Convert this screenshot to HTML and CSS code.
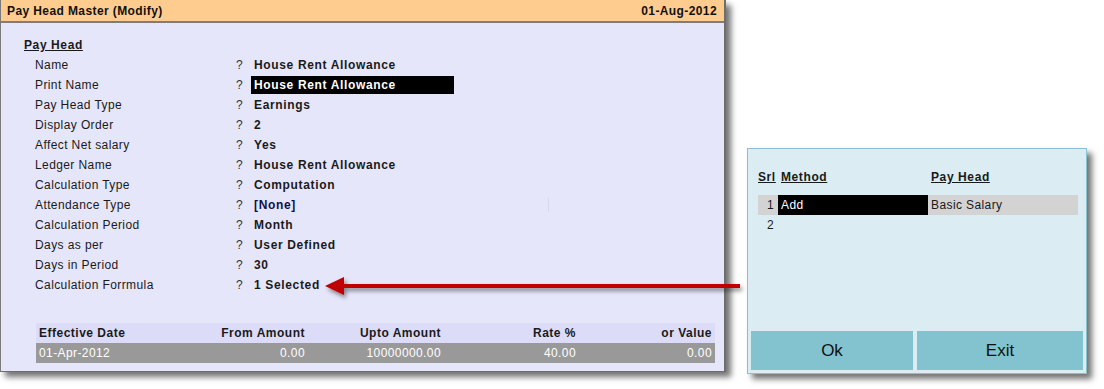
FILE: index.html
```html
<!DOCTYPE html>
<html lang="en">
<head>
  <meta charset="UTF-8">
  <title>Pay Head Master (Modify)</title>
  <link rel="stylesheet" href="styles.css">
</head>
<body>
  <div class="desk">
    <!-- Main window -->
    <div class="window">
      <div class="titlebar">
        <span>Pay Head Master (Modify)</span>
        <span>01-Aug-2012</span>
      </div>
      <div class="content">
        <div class="form">
          <div class="heading">Pay Head</div>
          <div class="row"><span class="label">Name</span><span class="q">?</span><span class="value">House Rent Allowance</span></div>
          <div class="row"><span class="label">Print Name</span><span class="q">?</span><span class="value active">House Rent Allowance</span></div>
          <div class="row"><span class="label">Pay Head Type</span><span class="q">?</span><span class="value">Earnings</span></div>
          <div class="row"><span class="label">Display Order</span><span class="q">?</span><span class="value">2</span></div>
          <div class="row"><span class="label">Affect Net salary</span><span class="q">?</span><span class="value">Yes</span></div>
          <div class="row"><span class="label">Ledger Name</span><span class="q">?</span><span class="value">House Rent Allowance</span></div>
          <div class="row"><span class="label">Calculation Type</span><span class="q">?</span><span class="value">Computation</span></div>
          <div class="row"><span class="label">Attendance Type</span><span class="q">?</span><span class="value none">[None]</span><span class="caret"></span></div>
          <div class="row"><span class="label">Calculation Period</span><span class="q">?</span><span class="value">Month</span></div>
          <div class="row"><span class="label">Days as per</span><span class="q">?</span><span class="value">User Defined</span></div>
          <div class="row"><span class="label">Days in Period</span><span class="q">?</span><span class="value">30</span></div>
          <div class="row"><span class="label">Calculation Forrmula</span><span class="q">?</span><span class="value">1 Selected</span></div>
        </div>

        <div class="slab">
          <div class="slab-row slab-head">
            <span class="c-date">Effective Date</span>
            <span>From Amount</span>
            <span>Upto Amount</span>
            <span>Rate %</span>
            <span class="c-last">or Value</span>
          </div>
          <div class="slab-row slab-data">
            <span class="c-date">01-Apr-2012</span>
            <span>0.00</span>
            <span>10000000.00</span>
            <span>40.00</span>
            <span class="c-last">0.00</span>
          </div>
        </div>
      </div>
    </div>

    <!-- Pointer arrow -->
    <svg class="arrow" width="440" height="40" viewBox="0 0 440 40">
      <defs>
        <filter id="shade" x="-10%" y="-100%" width="120%" height="300%">
          <feDropShadow dx="2" dy="3" stdDeviation="2" flood-color="#000" flood-opacity="0.45"/>
        </filter>
      </defs>
      <g filter="url(#shade)">
        <rect x="22" y="14" width="398" height="4" fill="#c00000"/>
        <polygon points="5,16 24,7 24,25" fill="#c00000"/>
      </g>
    </svg>

    <!-- Formula dialog -->
    <div class="dialog">
      <div class="grid">
        <div class="grid-head">
          <span class="g-srl">Srl</span>
          <span class="g-method">Method</span>
          <span class="g-head">Pay Head</span>
        </div>
        <div class="grid-row selected">
          <span class="g-srl">1</span>
          <span class="g-method active">Add</span>
          <span class="g-head">Basic Salary</span>
        </div>
        <div class="grid-row">
          <span class="g-srl">2</span>
          <span class="g-method"></span>
          <span class="g-head"></span>
        </div>
      </div>
      <div class="buttons">
        <button class="btn ok">Ok</button>
        <button class="btn exit">Exit</button>
      </div>
    </div>
  </div>
</body>
</html>
```

FILE: styles.css
```css
body {
  margin: 0;
  background: #ffffff;
  font-family: "Liberation Sans", Arial, sans-serif;
  font-size: 12px;
  letter-spacing: 0.4px;
  color: #1a1a1a;
}

.desk {
  position: relative;
  width: 1104px;
  height: 389px;
  overflow: hidden;
}

/* main window */
.window {
  position: absolute;
  left: 0;
  top: 0;
  width: 723px;
  height: 371px;
  display: flex;
  flex-direction: column;
  background: #e6e6fa;
  border-left: 1px solid #7a7a7a;
  border-right: 2px solid #6e6e6e;
  border-bottom: 1px solid #6e6e6e;
  box-shadow: 5px 5px 6px rgba(0, 0, 0, 0.55);
}

.titlebar {
  height: 21px;
  display: flex;
  justify-content: space-between;
  align-items: center;
  padding: 0 7px 0 6px;
  background: #ffcc90;
  border-bottom: 2px solid #7d7d7d;
  font-weight: bold;
  font-size: 12px;
  color: #111;
}

.content {
  flex: 1;
  display: flex;
  flex-direction: column;
  padding: 12px 8px 8px 23px;
}

.form {
  display: flex;
  flex-direction: column;
}

.heading {
  height: 20px;
  line-height: 20px;
  font-weight: bold;
  letter-spacing: 0.6px;
  text-decoration: underline;
}

.row {
  height: 20px;
  display: flex;
  align-items: center;
  padding-left: 11px;
}

.label {
  width: 201px;
}

.q {
  width: 15px;
  color: #333;
}

.value {
  width: 200px;
  height: 18px;
  line-height: 18px;
  padding-left: 3px;
  font-weight: bold;
  letter-spacing: 0.65px;
}

.value.active {
  background: #000000;
  color: #ffffff;
}

.value.none {
  width: auto;
  color: #10104a;
}

.caret {
  width: 1px;
  height: 14px;
  margin-left: 252px;
  background: #d8d8e8;
}

/* rate slab table */
.slab {
  margin-top: auto;
  margin-left: 12px;
  width: 679px;
}

.slab-row {
  display: grid;
  grid-template-columns: 134px 135px 136px 135px 139px;
  height: 20px;
  line-height: 20px;
  text-align: right;
}

.slab-row .c-date {
  text-align: left;
  padding-left: 3px;
}

.slab-row .c-last {
  padding-right: 3px;
}

.slab-head {
  background: #dcdcf8;
  font-weight: bold;
  letter-spacing: 0.5px;
}

.slab-data {
  background: #999999;
  color: #ffffff;
}

/* arrow over the canvas */
.arrow {
  position: absolute;
  left: 320px;
  top: 270px;
}

/* formula dialog */
.dialog {
  position: absolute;
  left: 747px;
  top: 148px;
  width: 338px;
  height: 224px;
  display: flex;
  flex-direction: column;
  justify-content: space-between;
  background: #dbedf3;
  border: 1px solid #86c3ce;
  box-shadow: 5px 5px 6px rgba(0, 0, 0, 0.55);
}

.grid {
  padding: 18px 0 0 10px;
}

.grid-head,
.grid-row {
  display: grid;
  grid-template-columns: 20px 150px 150px;
  width: 320px;
  height: 20px;
  line-height: 20px;
}

.grid-head {
  font-weight: bold;
  letter-spacing: 0.6px;
  margin-bottom: 8px;
}

.grid-head span {
  text-decoration: underline;
}

.grid-head .g-method,
.grid-row .g-method,
.grid-head .g-head,
.grid-row .g-head {
  padding-left: 3px;
}

.grid-row .g-srl {
  text-align: right;
  padding-right: 4px;
}

.grid-row.selected {
  background: #d3d3d3;
}

.grid-row .active {
  background: #000000;
  color: #ffffff;
}

.buttons {
  display: flex;
  gap: 4px;
  padding: 0 3px 3px 3px;
}

.btn {
  height: 39px;
  border: none;
  background: #82c3cf;
  font-family: "Liberation Sans", Arial, sans-serif;
  font-size: 17px;
  letter-spacing: 0;
  color: #111;
  padding: 0;
}

.btn.ok {
  width: 162px;
}

.btn.exit {
  flex: 1;
}
```
